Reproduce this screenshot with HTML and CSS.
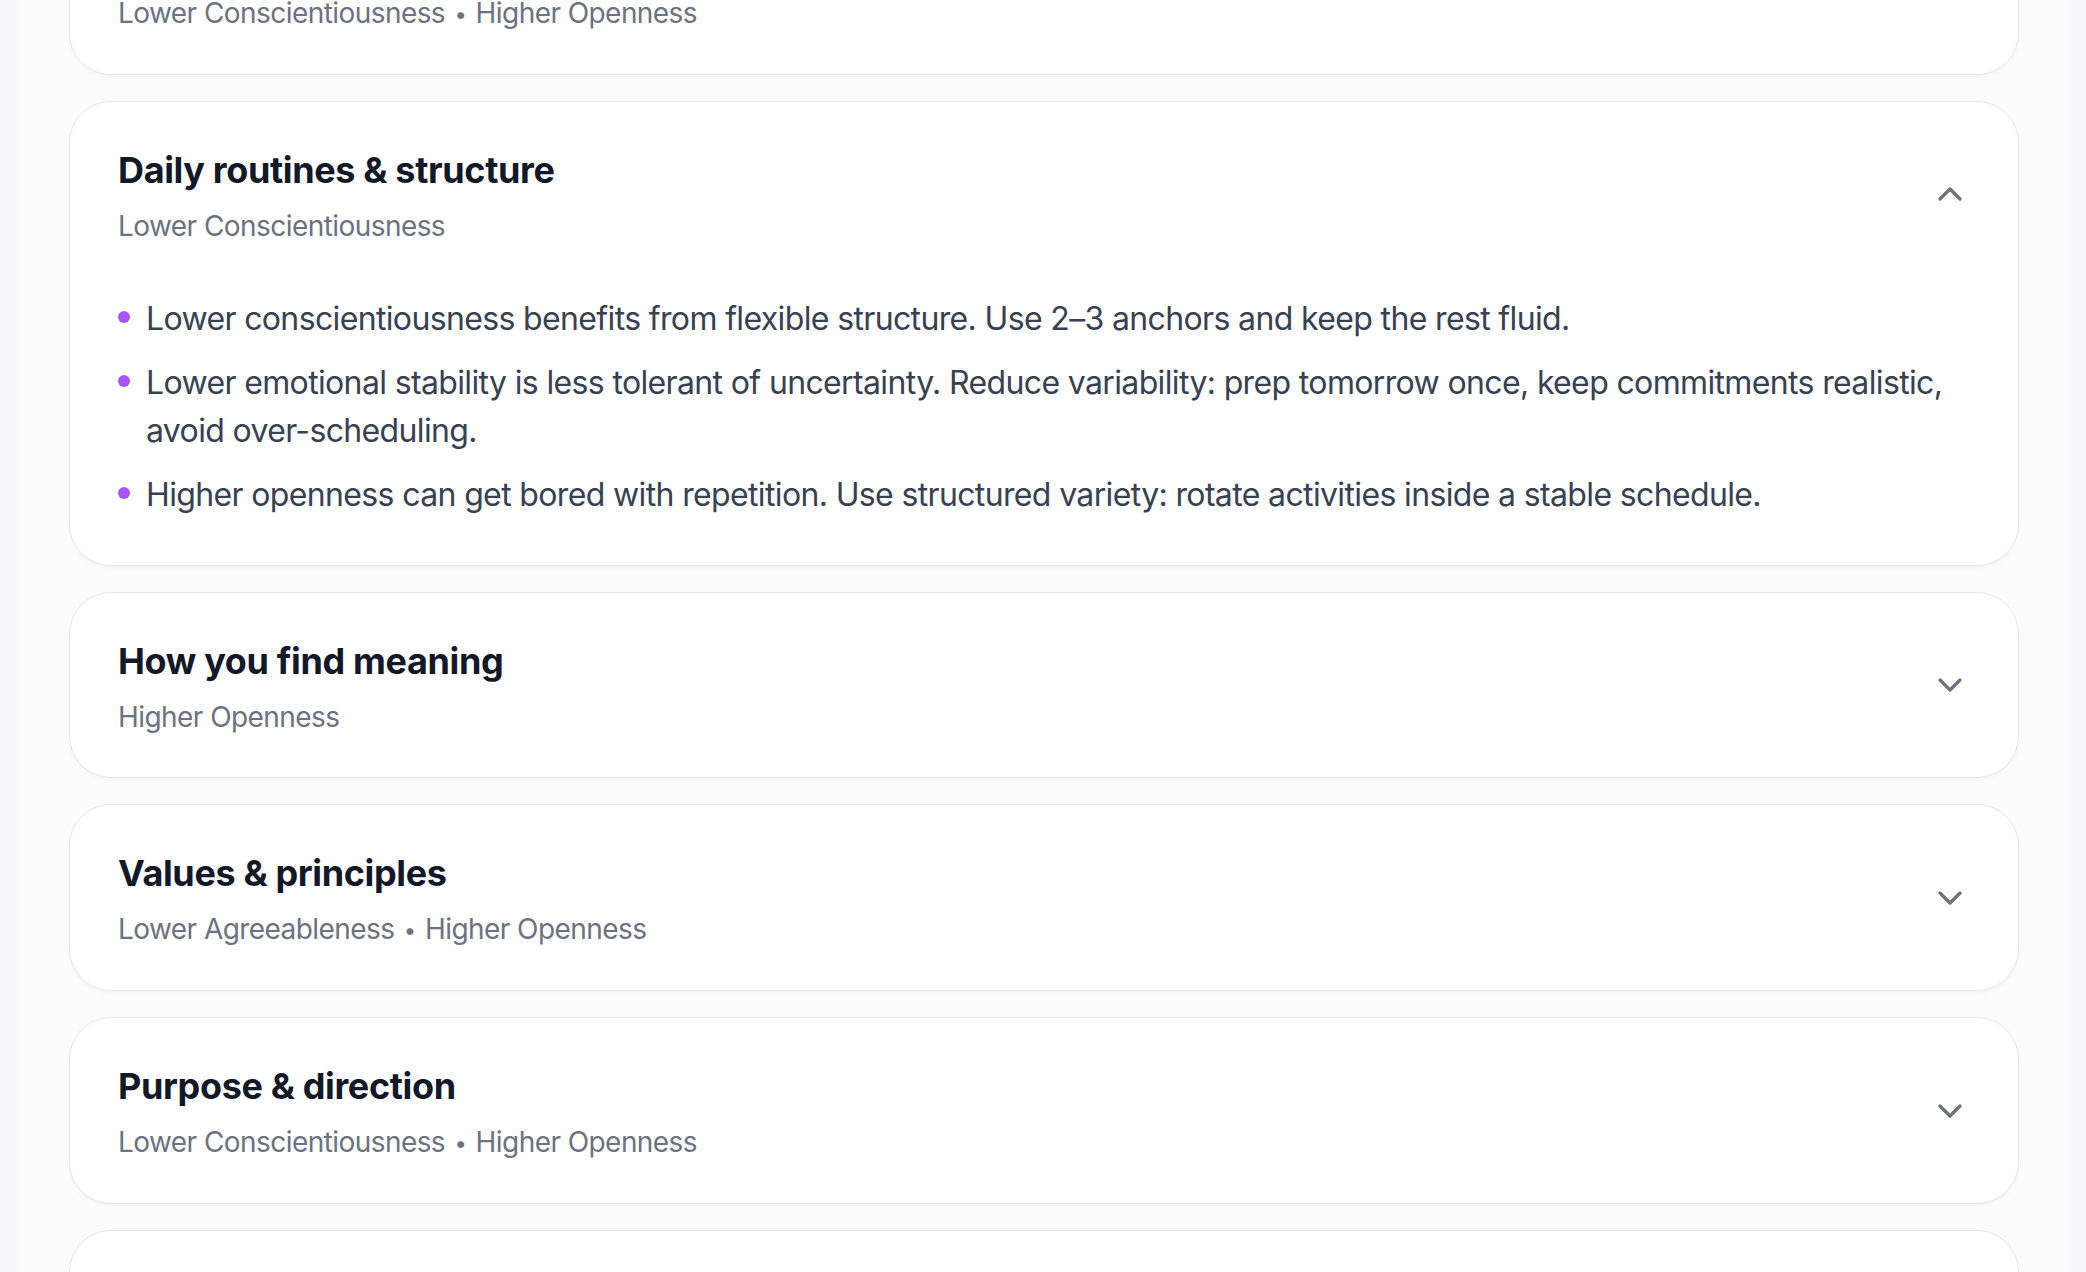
FILE: index.html
```html
<!DOCTYPE html>
<html lang="en">
<head>
<meta charset="utf-8">
<title>Insights</title>
<link rel="stylesheet" href="styles.css">
</head>
<body>
<div class="shell">
  <div class="edge edge-left"></div>
  <main class="main">
    <div class="list">
      <section class="card">
        <button class="card-header" type="button">
          <div class="heading">
            <h3 class="title">Work &amp; productivity</h3>
            <p class="traits">Lower Conscientiousness <span class="sep">•</span> Higher Openness</p>
          </div>
          <svg class="chev" viewBox="0 0 24 24" fill="none" stroke="currentColor" stroke-width="2" stroke-linecap="round" stroke-linejoin="round"><path d="m6 9 6 6 6-6"/></svg>
        </button>
      </section>

      <section class="card open">
        <button class="card-header" type="button">
          <div class="heading">
            <h3 class="title">Daily routines &amp; structure</h3>
            <p class="traits">Lower Conscientiousness</p>
          </div>
          <svg class="chev" viewBox="0 0 24 24" fill="none" stroke="currentColor" stroke-width="2" stroke-linecap="round" stroke-linejoin="round"><path d="m18 15-6-6-6 6"/></svg>
        </button>
        <ul class="points">
          <li><span class="dot"></span><span>Lower conscientiousness benefits from flexible structure. Use 2–3 anchors and keep the rest fluid.</span></li>
          <li><span class="dot"></span><span>Lower emotional stability is less tolerant of uncertainty. Reduce variability: prep tomorrow once, keep commitments realistic, avoid over-scheduling.</span></li>
          <li><span class="dot"></span><span>Higher openness can get bored with repetition. Use structured variety: rotate activities inside a stable schedule.</span></li>
        </ul>
      </section>

      <section class="card">
        <button class="card-header" type="button">
          <div class="heading">
            <h3 class="title">How you find meaning</h3>
            <p class="traits">Higher Openness</p>
          </div>
          <svg class="chev" viewBox="0 0 24 24" fill="none" stroke="currentColor" stroke-width="2" stroke-linecap="round" stroke-linejoin="round"><path d="m6 9 6 6 6-6"/></svg>
        </button>
      </section>

      <section class="card">
        <button class="card-header" type="button">
          <div class="heading">
            <h3 class="title">Values &amp; principles</h3>
            <p class="traits">Lower Agreeableness <span class="sep">•</span> Higher Openness</p>
          </div>
          <svg class="chev" viewBox="0 0 24 24" fill="none" stroke="currentColor" stroke-width="2" stroke-linecap="round" stroke-linejoin="round"><path d="m6 9 6 6 6-6"/></svg>
        </button>
      </section>

      <section class="card">
        <button class="card-header" type="button">
          <div class="heading">
            <h3 class="title">Purpose &amp; direction</h3>
            <p class="traits">Lower Conscientiousness <span class="sep">•</span> Higher Openness</p>
          </div>
          <svg class="chev" viewBox="0 0 24 24" fill="none" stroke="currentColor" stroke-width="2" stroke-linecap="round" stroke-linejoin="round"><path d="m6 9 6 6 6-6"/></svg>
        </button>
      </section>

      <section class="card">
        <button class="card-header" type="button">
          <div class="heading">
            <h3 class="title">Relationships &amp; connection</h3>
            <p class="traits">Lower Agreeableness</p>
          </div>
          <svg class="chev" viewBox="0 0 24 24" fill="none" stroke="currentColor" stroke-width="2" stroke-linecap="round" stroke-linejoin="round"><path d="m6 9 6 6 6-6"/></svg>
        </button>
      </section>
    </div>
  </main>
  <div class="edge edge-right"></div>
</div>
</body>
</html>
```
FILE: styles.css
```css
* { box-sizing: border-box; }

html, body {
  margin: 0;
  padding: 0;
  height: 100%;
  overflow: hidden;
}

body {
  font-family: Inter, "Noto Sans", "Liberation Sans", sans-serif;
  background: #fcfcfd;
  color: #374151;
}

.shell {
  display: flex;
  min-height: 100%;
}

.edge {
  flex: none;
  background: #f7f8fa;
}
.edge-left { width: 20px; }
.edge-right { width: 18px; }

.main {
  flex: 1;
  background: #fcfcfd;
  padding: 0 49px;
}

.list {
  display: flex;
  flex-direction: column;
  gap: 26px;
  margin-top: -112px;
}

.card {
  background: #ffffff;
  border: 1px solid #e5e7eb;
  border-radius: 42px;
  box-shadow: 0 2px 4px rgba(17, 24, 39, 0.04);
}

.card-header {
  display: flex;
  align-items: center;
  justify-content: space-between;
  width: 100%;
  padding: 40px 48px;
  border: 0;
  background: transparent;
  text-align: left;
  font: inherit;
  color: inherit;
  cursor: pointer;
}

.heading {
  display: flex;
  flex-direction: column;
  gap: 8px;
}

.title {
  margin: 0;
  font-size: 36px;
  line-height: 56px;
  font-weight: 700;
  color: #111827;
  letter-spacing: -0.01em;
}

.traits {
  margin: 0;
  font-size: 28px;
  line-height: 40px;
  color: #6b7280;
  letter-spacing: -0.02em;
}

.sep {
  font-size: 22px;
  vertical-align: 1px;
  margin: 0 2px;
}

.chev {
  flex: none;
  width: 40px;
  height: 40px;
  color: #6b7280;
}

.points {
  list-style: none;
  margin: 0;
  padding: 9px 48px 46px 48px;
  display: flex;
  flex-direction: column;
  gap: 16px;
}

.points li {
  display: flex;
  gap: 16px;
  font-size: 32px;
  line-height: 48px;
  color: #374151;
  letter-spacing: -0.02em;
}

.dot {
  flex: none;
  width: 12px;
  height: 12px;
  margin-top: 16px;
  border-radius: 50%;
  background: #a855f7;
}
```
